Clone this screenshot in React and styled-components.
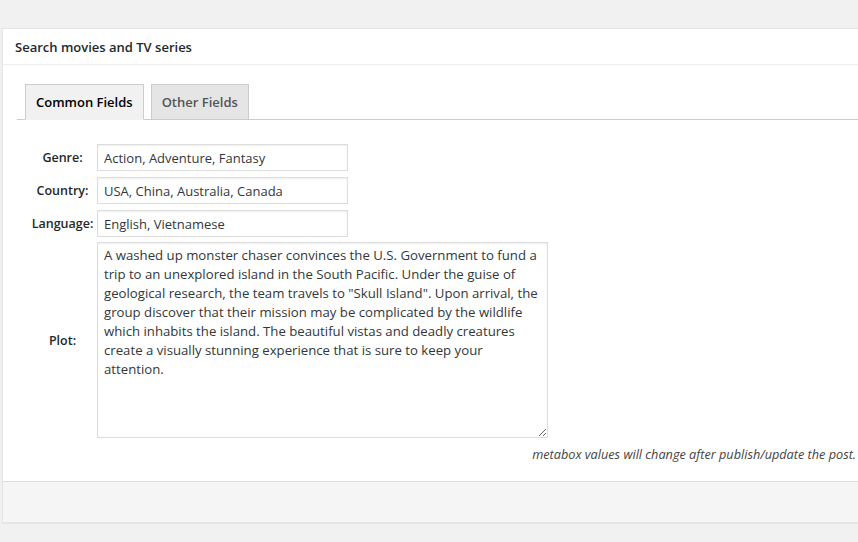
import styled, { createGlobalStyle } from "styled-components";

const GlobalStyle = createGlobalStyle`
  body {
    margin: 0;
    background: #f1f1f1;
    font-family: "Open Sans", "Noto Sans", sans-serif;
    font-size: 13px;
    color: #444;
    overflow: hidden;
  }
`;

const Page = styled.div`
  padding: 28px 0 0 2px;
  height: 542px;
  box-sizing: border-box;
`;

const Panel = styled.div`
  width: 870px;
  background: #fff;
  border: 1px solid #e5e5e5;
  box-shadow: 0 1px 1px rgba(0, 0, 0, 0.04);
`;

const Header = styled.h2`
  margin: 0;
  height: 36px;
  line-height: 37px;
  padding: 0 12px;
  font-size: 13px;
  font-weight: 600;
  color: #23282d;
  border-bottom: 1px solid #eee;
  box-sizing: border-box;
`;

const Body = styled.div`
  padding: 19px 0 0 14px;
`;

const TabNav = styled.div`
  display: flex;
  gap: 7px;
  padding-left: 8px;
  border-bottom: 1px solid #ccc;
`;

const Tab = styled.div`
  height: 35px;
  box-sizing: border-box;
  padding: 0 10px;
  line-height: 35px;
  font-weight: 600;
  font-size: 13px;
  border: 1px solid #ccc;
  border-bottom: none;
  margin-bottom: -1px;
  background: ${(p) => (p.$active ? "#f1f1f1" : "#e5e5e5")};
  color: ${(p) => (p.$active ? "#000" : "#555")};
  ${(p) => p.$active && "border-bottom: 1px solid #f1f1f1; height: 36px;"}
`;

const FieldTable = styled.div`
  display: grid;
  grid-template-columns: 65px auto;
  column-gap: 2px;
  row-gap: 6px;
  align-items: center;
  padding: 24px 0 0 13px;
`;

const Label = styled.label`
  text-align: center;
  font-weight: 600;
  font-size: 12.5px;
  color: #23282d;
`;

const Input = styled.input`
  width: 251px;
  height: 27px;
  box-sizing: border-box;
  border: 1px solid #ddd;
  box-shadow: inset 0 1px 2px rgba(0, 0, 0, 0.07);
  padding: 0 6px;
  font-family: inherit;
  font-size: 13px;
  color: #32373c;
  outline: none;
`;

const TextArea = styled.textarea`
  width: 451px;
  height: 196px;
  box-sizing: border-box;
  border: 1px solid #ddd;
  box-shadow: inset 0 1px 2px rgba(0, 0, 0, 0.07);
  padding: 3px 6px;
  font-family: inherit;
  font-size: 13.2px;
  line-height: 19px;
  color: #32373c;
  outline: none;
  resize: both;
  margin-top: -1px;
`;

const Note = styled.p`
  margin: 0;
  padding: 7px 17px 18px 0;
  text-align: right;
  font-style: italic;
  font-size: 12.7px;
  color: #444;
`;

const Footer = styled.div`
  height: 40px;
  background: #f5f5f5;
  border-top: 1px solid #ddd;
`;

const plot =
  'A washed up monster chaser convinces the U.S. Government to fund a trip to an unexplored island in the South Pacific. Under the guise of geological research, the team travels to "Skull Island". Upon arrival, the group discover that their mission may be complicated by the wildlife which inhabits the island. The beautiful vistas and deadly creatures create a visually stunning experience that is sure to keep your attention.';

export default function App() {
  return (
    <Page>
      <GlobalStyle />
      <Panel>
        <Header>Search movies and TV series</Header>
        <Body>
          <TabNav>
            <Tab $active>Common Fields</Tab>
            <Tab>Other Fields</Tab>
          </TabNav>
          <FieldTable>
            <Label>Genre:</Label>
            <Input defaultValue="Action, Adventure, Fantasy" />
            <Label>Country:</Label>
            <Input defaultValue="USA, China, Australia, Canada" />
            <Label>Language:</Label>
            <Input defaultValue="English, Vietnamese" />
            <Label>Plot:</Label>
            <TextArea defaultValue={plot} />
          </FieldTable>
        </Body>
        <Note>metabox values will change after publish/update the post.</Note>
        <Footer />
      </Panel>
    </Page>
  );
}
